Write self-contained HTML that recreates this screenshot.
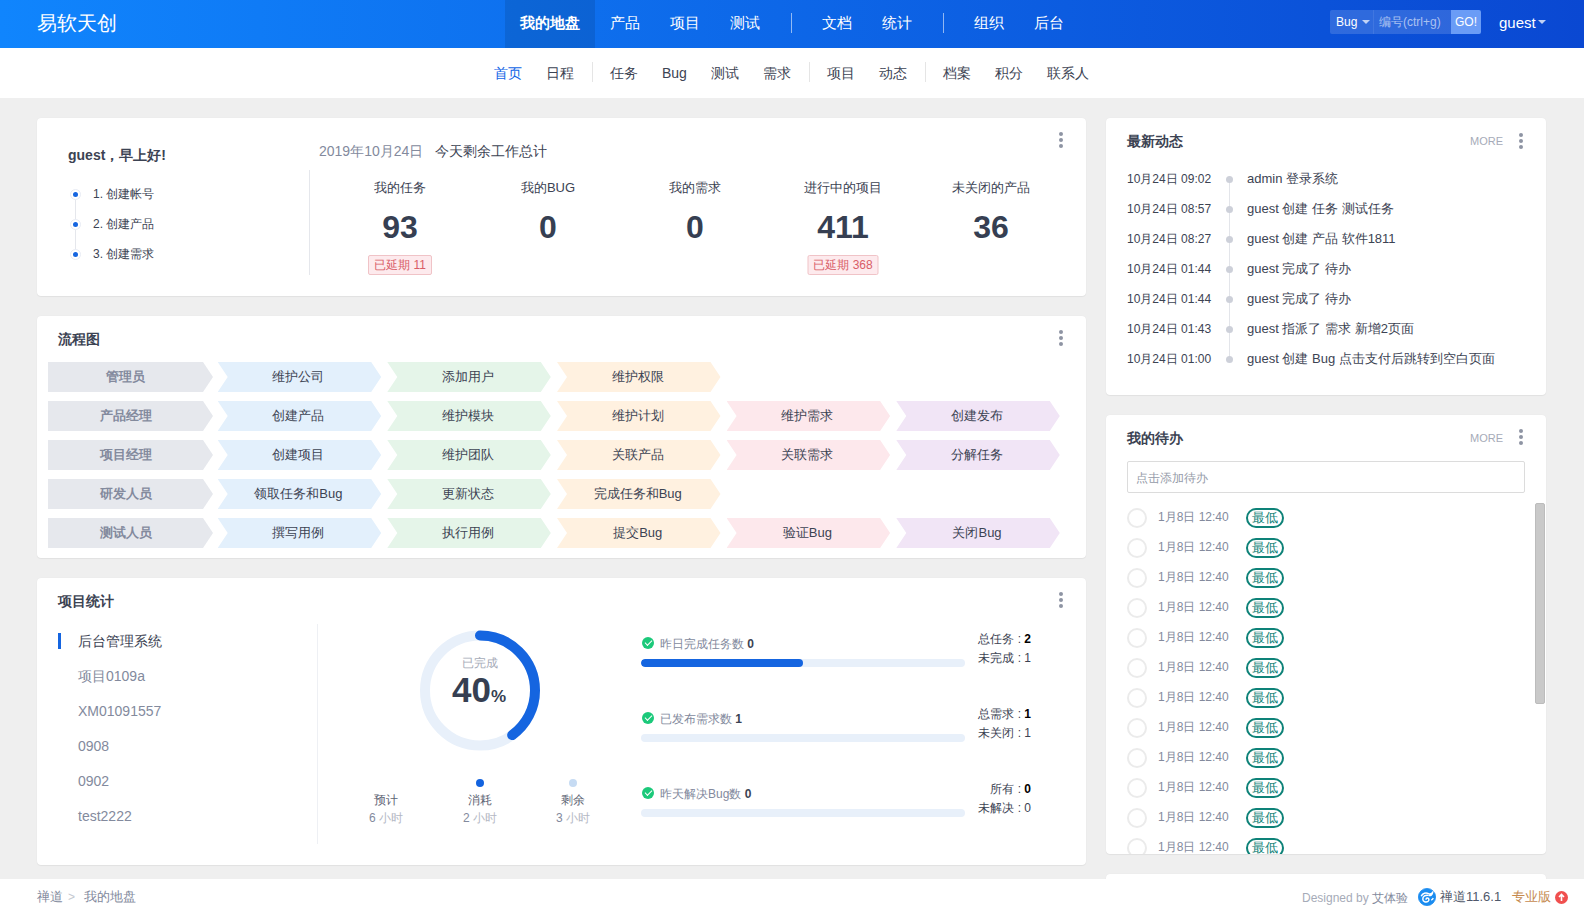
<!DOCTYPE html>
<html><head><meta charset="utf-8">
<style>
*{margin:0;padding:0;box-sizing:border-box}
html,body{width:1584px;height:912px;overflow:hidden}
body{position:relative;background:#efefef;font-family:"Liberation Sans",sans-serif;color:#3c4353;font-size:13px}
.a{position:absolute;white-space:nowrap}
#hdr{position:absolute;left:0;top:0;width:1584px;height:48px;background:linear-gradient(to right,#1085fd,#0a48d2)}
#hdr .nav{color:#fff;font-size:15px;line-height:48px;top:-1px}
#sub{position:absolute;left:0;top:48px;width:1584px;height:50px;background:#fff}
#sub .it{font-size:14px;line-height:20px;top:15px;color:#3c4353}
.sep{position:absolute;width:1px;background:#e5e5e5}
.card{position:absolute;background:#fff;border-radius:4px;box-shadow:0 1px 1px rgba(0,0,0,.05),0 0 1px rgba(0,0,0,.08)}
.kebab{position:absolute;width:4px;height:16px}
.kebab i{position:absolute;left:0;width:4px;height:4px;border-radius:50%;background:#8e94a3}
.title{font-size:14px;font-weight:bold;color:#3c4353;line-height:20px}
#foot{position:absolute;left:0;top:879px;width:1584px;height:33px;background:#fff}

.step{position:absolute;left:70px;width:11px;height:11px;border-radius:50%;background:#fff;border:1px solid #e8ecf4}
.step i{position:absolute;left:2px;top:2px;width:5px;height:5px;border-radius:50%;background:#1565e0}
.st{left:93px;font-size:12px;line-height:20px;color:#3c4353}
.col{position:absolute;top:170px;width:148px;height:110px;text-align:center}
.col .lb{position:absolute;left:0;top:8px;width:148px;font-size:13px;line-height:20px;color:#3c4353}
.col .num{position:absolute;left:0;top:39px;width:148px;font-size:32px;line-height:36px;font-weight:bold;color:#363f52}
.col .late{position:absolute;left:50%;transform:translateX(-50%);top:85px;height:20px;border:1px solid #f0c3c7;background:#fdeaed;color:#d95d67;font-size:12px;line-height:18px;border-radius:2px}

.fl{position:absolute;width:163.5px;height:30px;line-height:30px;text-align:center;font-size:13px;color:#3c4353;padding:0 12px 0 10px;white-space:nowrap;clip-path:polygon(0 0,153.5px 0,163.5px 15px,153.5px 30px,0 30px,10px 15px)}
.f0{width:165px;background:#e6e8ed;color:#838a9d;font-weight:bold;padding:0 10px 0 0;clip-path:polygon(0 0,155px 0,165px 15px,155px 30px,0 30px)}
.f1{background:#e3f0fc}.f2{background:#e5f5e9}.f3{background:#fff1e0}.f4{background:#fde8ec}.f5{background:#f1e5f6}

.pj{left:78px;font-size:14px;line-height:20px;color:#838a9d}
.lg{position:absolute;top:792px;width:80px;text-align:center;font-size:12px;line-height:17px;color:#5c6373}
.lg .h{line-height:18px}
.lg .h{color:#838a9d}.lg .h span{color:#b4b9c4}
.pg{position:absolute;left:641px;width:324px;height:34px}
.pg .ck{position:absolute;left:1px;top:2px;width:12px;height:12px;border-radius:50%;background:#1bc97a}
.pg .ck:after{content:"";position:absolute;left:3px;top:3px;width:6px;height:3px;border-left:1.5px solid #fff;border-bottom:1.5px solid #fff;transform:rotate(-45deg)}
.pg .pt{position:absolute;left:19px;top:1px;font-size:12px;line-height:16px;color:#838a9d}
.pg .pt b{color:#3c4353}
.pg .bar{position:absolute;left:0;top:24px;width:324px;height:8px;border-radius:4px;background:#e8f0fa;overflow:hidden}
.pg .bar i{position:absolute;left:0;top:0;height:8px;border-radius:4px;background:#1565e0}
.rs{position:absolute;left:930px;width:101px;text-align:right;font-size:12px;line-height:18px;color:#3c4353}
.rs b{color:#000}

.more{font-size:11px;line-height:16px;color:#a6abb8}
.dt{left:1127px;font-size:12px;line-height:18px;color:#3c4353}
.dd{left:1226px;width:7px;height:7px;border-radius:50%;background:#cdd0d9}
.dc{left:1247px;font-size:13px;line-height:20px;color:#3c4353}
.tc{left:21px;width:20px;height:20px;border-radius:50%;border:2px solid #ebebeb;background:#fff}
.tt{left:52px;font-size:12px;line-height:18px;color:#838a9d}
.tb{left:140px;width:38px;height:20px;border:2px solid #0e8278;border-radius:10px;color:#0e8278;font-size:13px;line-height:16px;text-align:center}
</style></head><body>

<!-- HEADER -->
<div id="hdr">
  <div class="a" style="left:37px;top:9px;font-size:20px;line-height:28px;color:#fff">易软天创</div>
  <div class="a" style="left:505px;top:0;width:90px;height:48px;background:rgba(0,0,0,.1)"></div>
  <div class="a nav" style="left:520px;font-weight:bold">我的地盘</div>
  <div class="a nav" style="left:610px">产品</div>
  <div class="a nav" style="left:670px">项目</div>
  <div class="a nav" style="left:730px">测试</div>
  <div class="a" style="left:791px;top:13px;width:1px;height:20px;background:rgba(255,255,255,.55)"></div>
  <div class="a nav" style="left:822px">文档</div>
  <div class="a nav" style="left:882px">统计</div>
  <div class="a" style="left:943px;top:13px;width:1px;height:20px;background:rgba(255,255,255,.55)"></div>
  <div class="a nav" style="left:974px">组织</div>
  <div class="a nav" style="left:1034px">后台</div>

  <div class="a" style="left:1330px;top:10px;width:151px;height:24px;border-radius:2px;overflow:hidden">
    <div class="a" style="left:0;top:0;width:43px;height:24px;background:rgba(255,255,255,.15);color:#fff;font-size:12px;line-height:24px;padding-left:6px">Bug</div>
    <div class="a" style="left:32px;top:10px;width:0;height:0;border-left:4px solid transparent;border-right:4px solid transparent;border-top:4px solid rgba(255,255,255,.7)"></div>
    <div class="a" style="left:43px;top:0;width:1px;height:24px;background:rgba(255,255,255,.22)"></div>
    <div class="a" style="left:44px;top:0;width:77px;height:24px;background:rgba(255,255,255,.15);color:rgba(255,255,255,.6);font-size:12px;line-height:24px;padding-left:5px">编号(ctrl+g)</div>
    <div class="a" style="left:121px;top:0;width:30px;height:24px;background:#6a9cf6;color:#fff;font-size:12px;line-height:24px;text-align:center">GO!</div>
  </div>
  <div class="a" style="left:1499px;top:12px;color:#fff;font-size:15px;line-height:22px">guest</div>
  <div class="a" style="left:1538px;top:20px;width:0;height:0;border-left:4px solid transparent;border-right:4px solid transparent;border-top:4px solid rgba(255,255,255,.75)"></div>
</div>

<!-- SUBNAV -->
<div id="sub">
  <div class="a it" style="left:494px;color:#1064e6">首页</div>
  <div class="a it" style="left:546px">日程</div>
  <div class="sep" style="left:592px;top:14px;height:20px"></div>
  <div class="a it" style="left:610px">任务</div>
  <div class="a it" style="left:662px">Bug</div>
  <div class="a it" style="left:711px">测试</div>
  <div class="a it" style="left:763px">需求</div>
  <div class="sep" style="left:809px;top:14px;height:20px"></div>
  <div class="a it" style="left:827px">项目</div>
  <div class="a it" style="left:879px">动态</div>
  <div class="sep" style="left:925px;top:14px;height:20px"></div>
  <div class="a it" style="left:943px">档案</div>
  <div class="a it" style="left:995px">积分</div>
  <div class="a it" style="left:1047px">联系人</div>
</div>

<!-- CARDS -->
<div class="card" id="c1" style="left:37px;top:118px;width:1049px;height:178px"></div>
<div class="card" id="c2" style="left:37px;top:316px;width:1049px;height:242px"></div>
<div class="card" id="c3" style="left:37px;top:578px;width:1049px;height:287px"></div>
<div class="card" id="r1" style="left:1106px;top:118px;width:440px;height:277px"></div>
<div class="card" id="r2" style="left:1106px;top:415px;width:440px;height:439px"></div>
<div class="card" id="r3" style="left:1106px;top:874px;width:440px;height:100px"></div>


<!-- CARD1 CONTENT -->
<div class="kebab" style="left:1059px;top:132px"><i style="top:0"></i><i style="top:6px"></i><i style="top:12px"></i></div>
<div class="a title" style="left:68px;top:145px">guest，早上好!</div>
<div class="a" style="left:319px;top:141px;font-size:14px;line-height:20px;color:#838a9d">2019年10月24日</div>
<div class="a" style="left:435px;top:141px;font-size:14px;line-height:20px;color:#3c4353">今天剩余工作总计</div>
<div class="a" style="left:75px;top:194px;width:1px;height:60px;background:#e5e7ec"></div>
<div class="step" style="top:189px"><i></i></div>
<div class="step" style="top:219px"><i></i></div>
<div class="step" style="top:249px"><i></i></div>
<div class="a st" style="top:184px">1. 创建帐号</div>
<div class="a st" style="top:214px">2. 创建产品</div>
<div class="a st" style="top:244px">3. 创建需求</div>
<div class="a" style="left:309px;top:170px;width:1px;height:105px;background:#e5e7ec"></div>
<div class="col" style="left:326px"><div class="lb">我的任务</div><div class="num">93</div><div class="late" style="width:64px">已延期 11</div></div>
<div class="col" style="left:474px"><div class="lb">我的BUG</div><div class="num">0</div></div>
<div class="col" style="left:621px"><div class="lb">我的需求</div><div class="num">0</div></div>
<div class="col" style="left:769px"><div class="lb">进行中的项目</div><div class="num">411</div><div class="late" style="width:71px">已延期 368</div></div>
<div class="col" style="left:917px"><div class="lb">未关闭的产品</div><div class="num">36</div></div>


<!-- CARD2 CONTENT -->
<div class="kebab" style="left:1059px;top:330px"><i style="top:0"></i><i style="top:6px"></i><i style="top:12px"></i></div>
<div class="a title" style="left:58px;top:329px">流程图</div>
<div class="fl f0" style="left:48.0px;top:362px">管理员</div>
<div class="fl f1" style="left:217.7px;top:362px">维护公司</div>
<div class="fl f2" style="left:387.3px;top:362px">添加用户</div>
<div class="fl f3" style="left:557.0px;top:362px">维护权限</div>
<div class="fl f0" style="left:48.0px;top:401px">产品经理</div>
<div class="fl f1" style="left:217.7px;top:401px">创建产品</div>
<div class="fl f2" style="left:387.3px;top:401px">维护模块</div>
<div class="fl f3" style="left:557.0px;top:401px">维护计划</div>
<div class="fl f4" style="left:726.6px;top:401px">维护需求</div>
<div class="fl f5" style="left:896.3px;top:401px">创建发布</div>
<div class="fl f0" style="left:48.0px;top:440px">项目经理</div>
<div class="fl f1" style="left:217.7px;top:440px">创建项目</div>
<div class="fl f2" style="left:387.3px;top:440px">维护团队</div>
<div class="fl f3" style="left:557.0px;top:440px">关联产品</div>
<div class="fl f4" style="left:726.6px;top:440px">关联需求</div>
<div class="fl f5" style="left:896.3px;top:440px">分解任务</div>
<div class="fl f0" style="left:48.0px;top:479px">研发人员</div>
<div class="fl f1" style="left:217.7px;top:479px">领取任务和Bug</div>
<div class="fl f2" style="left:387.3px;top:479px">更新状态</div>
<div class="fl f3" style="left:557.0px;top:479px">完成任务和Bug</div>
<div class="fl f0" style="left:48.0px;top:518px">测试人员</div>
<div class="fl f1" style="left:217.7px;top:518px">撰写用例</div>
<div class="fl f2" style="left:387.3px;top:518px">执行用例</div>
<div class="fl f3" style="left:557.0px;top:518px">提交Bug</div>
<div class="fl f4" style="left:726.6px;top:518px">验证Bug</div>
<div class="fl f5" style="left:896.3px;top:518px">关闭Bug</div>


<!-- CARD3 CONTENT -->
<div class="kebab" style="left:1059px;top:592px"><i style="top:0"></i><i style="top:6px"></i><i style="top:12px"></i></div>
<div class="a title" style="left:58px;top:591px">项目统计</div>
<div class="a" style="left:58px;top:633px;width:3px;height:16px;background:#1565e0"></div>
<div class="a pj" style="top:631px;color:#3c4353">后台管理系统</div>
<div class="a pj" style="top:666px">项目0109a</div>
<div class="a pj" style="top:701px">XM01091557</div>
<div class="a pj" style="top:736px">0908</div>
<div class="a pj" style="top:771px">0902</div>
<div class="a pj" style="top:806px">test2222</div>
<div class="a" style="left:317px;top:624px;width:1px;height:220px;background:#eef0f4"></div>
<svg class="a" style="left:410px;top:620px" width="140" height="140" viewBox="0 0 140 140">
  <circle cx="70" cy="70.5" r="55" fill="none" stroke="#e8f0fa" stroke-width="10"/>
  <circle cx="70" cy="70.5" r="55" fill="none" stroke="#1565e0" stroke-width="10" stroke-linecap="round" stroke-dasharray="138.2 400" transform="rotate(-90 70 70.5)"/>
</svg>
<div class="a" style="left:430px;top:654px;width:100px;text-align:center;font-size:12px;line-height:18px;color:#a6abb8">已完成</div>
<div class="a" style="left:429px;top:671px;width:100px;text-align:center;line-height:38px;color:#363f52;font-weight:bold"><span style="font-size:35px">40</span><span style="font-size:17px">%</span></div>
<div class="a" style="left:476px;top:779px;width:8px;height:8px;border-radius:50%;background:#1363df"></div>
<div class="a" style="left:569px;top:779px;width:8px;height:8px;border-radius:50%;background:#c6dbf3"></div>
<div class="lg" style="left:346px"><div>预计</div><div class="h">6 <span>小时</span></div></div>
<div class="lg" style="left:440px"><div>消耗</div><div class="h">2 <span>小时</span></div></div>
<div class="lg" style="left:533px"><div>剩余</div><div class="h">3 <span>小时</span></div></div>

<div class="pg" style="top:635px"><span class="ck"></span><span class="pt">昨日完成任务数 <b>0</b></span><div class="bar"><i style="width:162px"></i></div></div>
<div class="pg" style="top:710px"><span class="ck"></span><span class="pt">已发布需求数 <b>1</b></span><div class="bar"></div></div>
<div class="pg" style="top:785px"><span class="ck"></span><span class="pt">昨天解决Bug数 <b>0</b></span><div class="bar"></div></div>
<div class="rs" style="top:630px">总任务 : <b>2</b></div>
<div class="rs" style="top:649px">未完成 : 1</div>
<div class="rs" style="top:705px">总需求 : <b>1</b></div>
<div class="rs" style="top:724px">未关闭 : 1</div>
<div class="rs" style="top:780px">所有 : <b>0</b></div>
<div class="rs" style="top:799px">未解决 : 0</div>


<!-- R1 CONTENT -->
<div class="a title" style="left:1127px;top:131px">最新动态</div>
<div class="a more" style="left:1470px;top:133px">MORE</div>
<div class="kebab" style="left:1519px;top:133px"><i style="top:0"></i><i style="top:6px"></i><i style="top:12px"></i></div>
<div class="a" style="left:1229px;top:180px;width:1px;height:180px;background:#e3e5ea"></div>
<div class="a dt" style="top:170px">10月24日 09:02</div><div class="a dd" style="top:176px"></div><div class="a dc" style="top:169px">admin 登录系统</div>
<div class="a dt" style="top:200px">10月24日 08:57</div><div class="a dd" style="top:206px"></div><div class="a dc" style="top:199px">guest 创建 任务 测试任务</div>
<div class="a dt" style="top:230px">10月24日 08:27</div><div class="a dd" style="top:236px"></div><div class="a dc" style="top:229px">guest 创建 产品 软件1811</div>
<div class="a dt" style="top:260px">10月24日 01:44</div><div class="a dd" style="top:266px"></div><div class="a dc" style="top:259px">guest 完成了 待办</div>
<div class="a dt" style="top:290px">10月24日 01:44</div><div class="a dd" style="top:296px"></div><div class="a dc" style="top:289px">guest 完成了 待办</div>
<div class="a dt" style="top:320px">10月24日 01:43</div><div class="a dd" style="top:326px"></div><div class="a dc" style="top:319px">guest 指派了 需求 新增2页面</div>
<div class="a dt" style="top:350px">10月24日 01:00</div><div class="a dd" style="top:356px"></div><div class="a dc" style="top:349px">guest 创建 Bug 点击支付后跳转到空白页面</div>

<!-- R2 CONTENT -->
<div class="a title" style="left:1127px;top:428px">我的待办</div>
<div class="a more" style="left:1470px;top:430px">MORE</div>
<div class="kebab" style="left:1519px;top:429px"><i style="top:0"></i><i style="top:6px"></i><i style="top:12px"></i></div>
<div class="a" style="left:1127px;top:461px;width:398px;height:32px;border:1px solid #dcdcdc;border-radius:2px;font-size:12px;line-height:31px;padding-left:8px;padding-top:1px;color:#959ba9">点击添加待办</div>
<div class="a" style="left:1106px;top:500px;width:440px;height:354px;overflow:hidden">
<div class="a tc" style="top:7.5px"></div><div class="a tt" style="top:7.5px">1月8日 12:40</div><div class="a tb" style="top:8.0px">最低</div>
<div class="a tc" style="top:37.5px"></div><div class="a tt" style="top:37.5px">1月8日 12:40</div><div class="a tb" style="top:38.0px">最低</div>
<div class="a tc" style="top:67.5px"></div><div class="a tt" style="top:67.5px">1月8日 12:40</div><div class="a tb" style="top:68.0px">最低</div>
<div class="a tc" style="top:97.5px"></div><div class="a tt" style="top:97.5px">1月8日 12:40</div><div class="a tb" style="top:98.0px">最低</div>
<div class="a tc" style="top:127.5px"></div><div class="a tt" style="top:127.5px">1月8日 12:40</div><div class="a tb" style="top:128.0px">最低</div>
<div class="a tc" style="top:157.5px"></div><div class="a tt" style="top:157.5px">1月8日 12:40</div><div class="a tb" style="top:158.0px">最低</div>
<div class="a tc" style="top:187.5px"></div><div class="a tt" style="top:187.5px">1月8日 12:40</div><div class="a tb" style="top:188.0px">最低</div>
<div class="a tc" style="top:217.5px"></div><div class="a tt" style="top:217.5px">1月8日 12:40</div><div class="a tb" style="top:218.0px">最低</div>
<div class="a tc" style="top:247.5px"></div><div class="a tt" style="top:247.5px">1月8日 12:40</div><div class="a tb" style="top:248.0px">最低</div>
<div class="a tc" style="top:277.5px"></div><div class="a tt" style="top:277.5px">1月8日 12:40</div><div class="a tb" style="top:278.0px">最低</div>
<div class="a tc" style="top:307.5px"></div><div class="a tt" style="top:307.5px">1月8日 12:40</div><div class="a tb" style="top:308.0px">最低</div>
<div class="a tc" style="top:337.5px"></div><div class="a tt" style="top:337.5px">1月8日 12:40</div><div class="a tb" style="top:338.0px">最低</div>
<div class="a tc" style="top:367.5px"></div><div class="a tt" style="top:367.5px">1月8日 12:40</div><div class="a tb" style="top:368.0px">最低</div>
<div class="a" style="left:429px;top:3px;width:10px;height:201px;border-radius:2px;background:#c9c9c9;border:1px solid #bcbcbc"></div>
</div>

<!-- FOOTER -->
<div id="foot">
  <div class="a" style="left:37px;top:9px;font-size:13px;line-height:18px;color:#838a9d">禅道</div>
  <div class="a" style="left:68px;top:9px;font-size:12px;line-height:18px;color:#c4c8d0">&gt;</div>
  <div class="a" style="left:84px;top:9px;font-size:13px;line-height:18px;color:#838a9d">我的地盘</div>
  <div class="a" style="left:1302px;top:10px;font-size:12px;line-height:18px;color:#a6abb8">Designed by <span style="color:#838a9d">艾体验</span></div>
  <svg class="a" style="left:1418px;top:9px" width="18" height="18" viewBox="0 0 18 18"><circle cx="9" cy="9" r="8.6" fill="#1a8cf0" stroke="#1a8cf0" stroke-width=".8"/><path d="M3.2 8.2C4.5 5 8 4.2 10.5 5.6C12 6.4 13.6 5.6 14.6 4.4C14.4 6.8 12.6 8 10.6 7.4" fill="none" stroke="#fff" stroke-width="1.5"/><path d="M10.6 7.4C7.6 6.6 4.6 8.4 4.8 11.2C5 13.6 8 14.8 10 13.4C11.6 12.2 11 10 9.4 10C8.2 10 7.8 11.2 8.4 11.8" fill="none" stroke="#fff" stroke-width="1.5"/><path d="M13.2 12.2C14.2 11.8 15 11 15.2 10" fill="none" stroke="#fff" stroke-width="1.3"/></svg>
  <div class="a" style="left:1440px;top:9px;font-size:13px;line-height:18px;color:#50586a">禅道11.6.1</div>
  <div class="a" style="left:1512px;top:9px;font-size:13px;line-height:18px;color:#c58a4f">专业版</div>
  <div class="a" style="left:1555px;top:12px;width:13px;height:13px;border-radius:50%;background:#f0504f"></div>
  <svg class="a" style="left:1555px;top:12px" width="13" height="13" viewBox="0 0 13 13"><path d="M6.5 10V3.5M4 6l2.5-2.5L9 6" fill="none" stroke="#fff" stroke-width="1.6"/></svg>
</div>

</body></html>
